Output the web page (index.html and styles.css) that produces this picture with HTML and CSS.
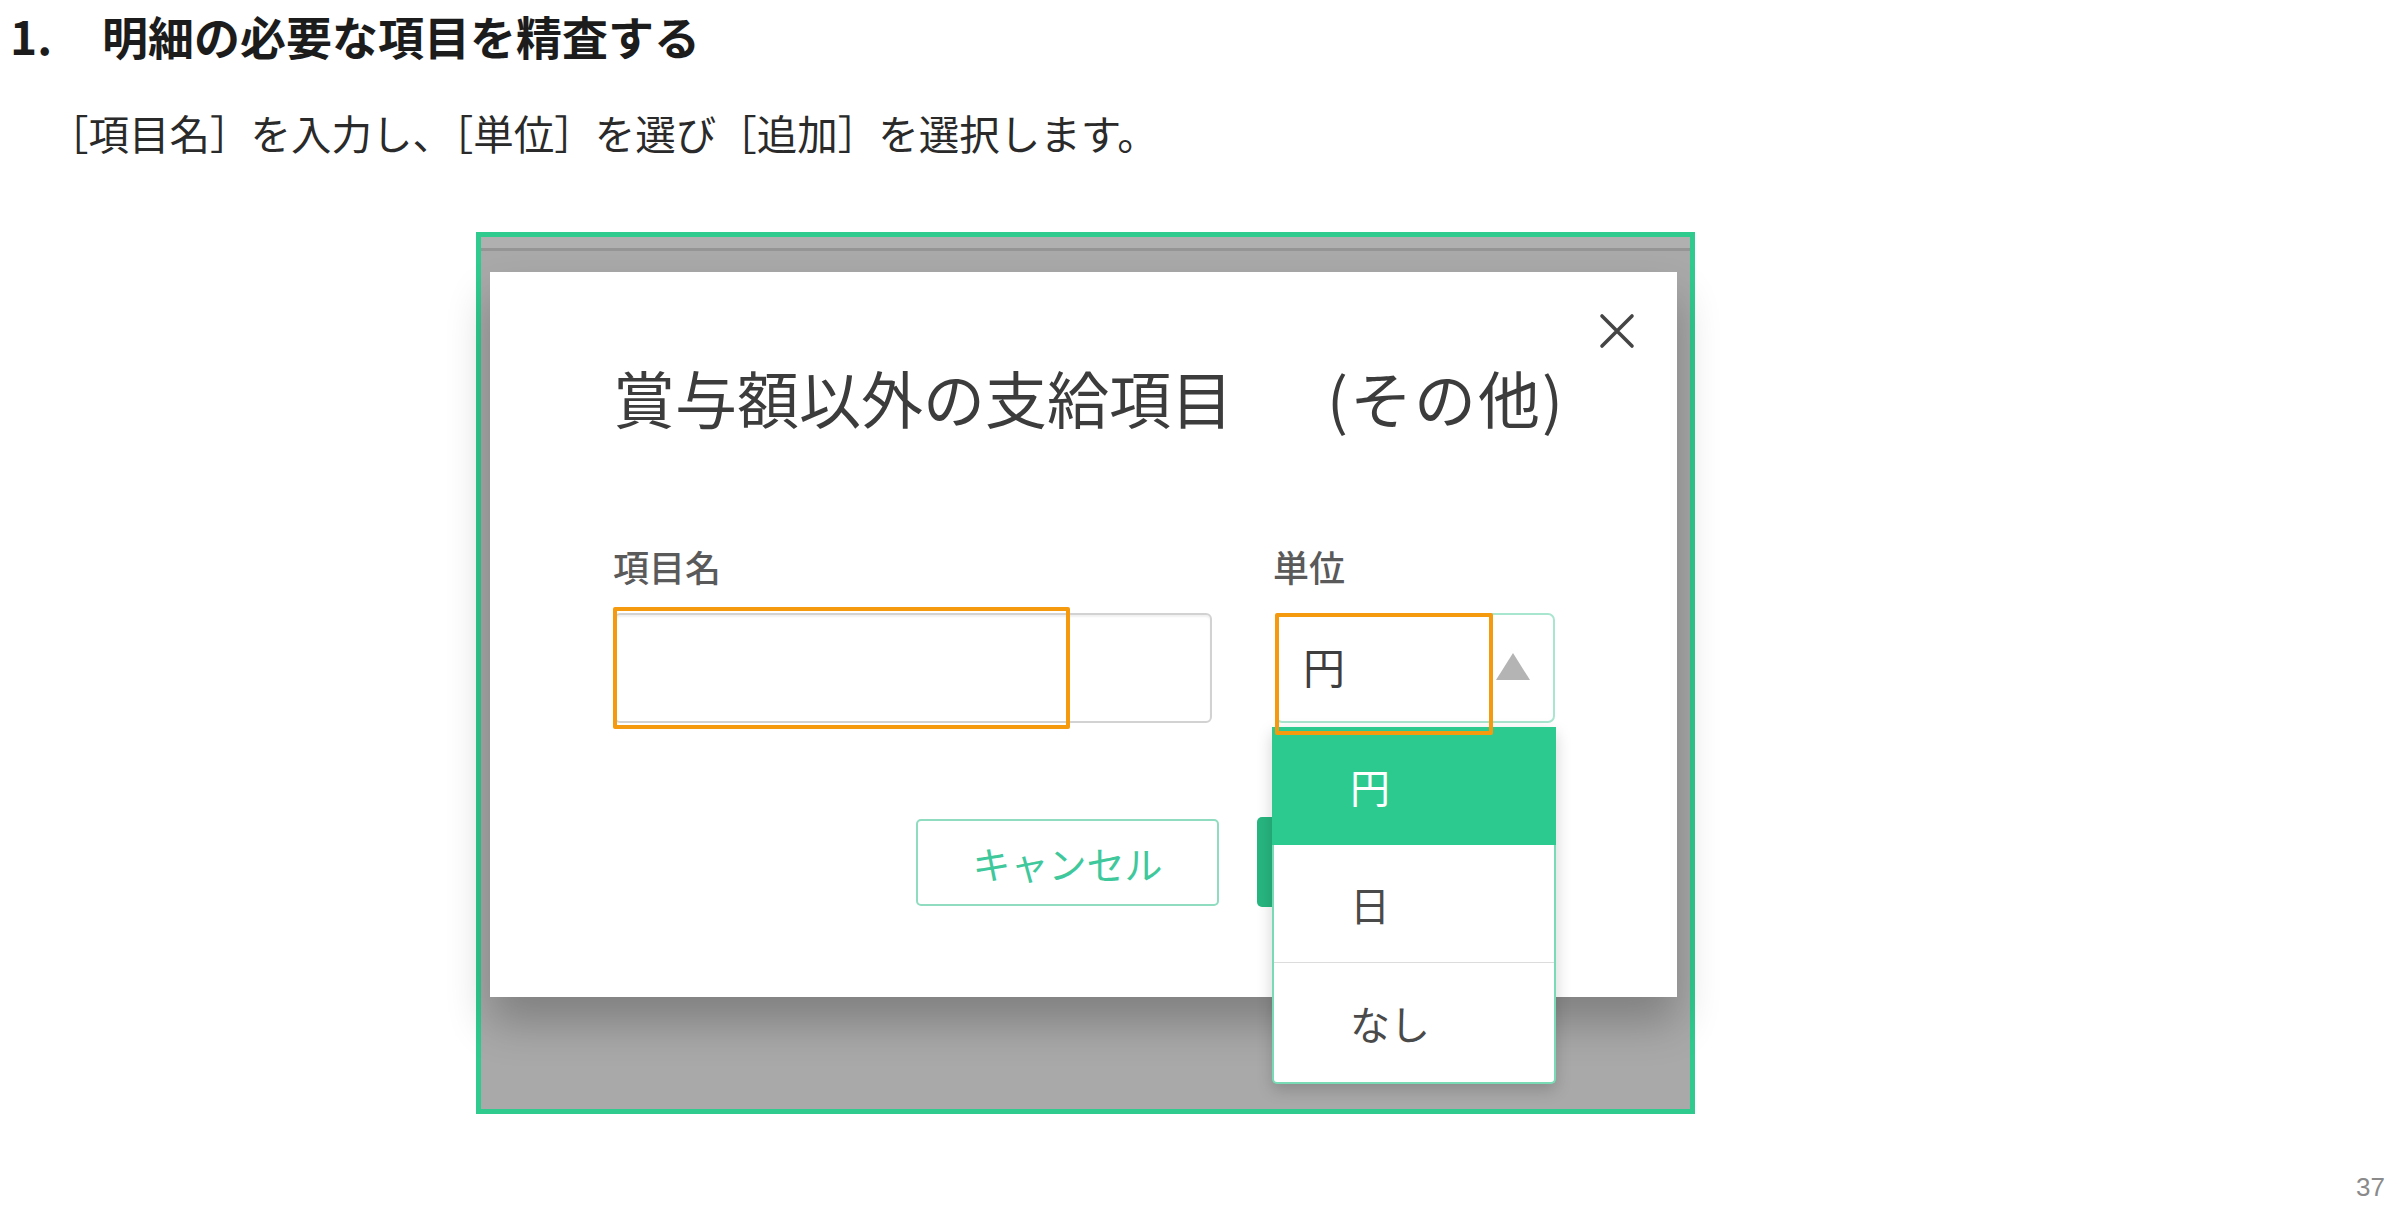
FILE: index.html
```html
<!DOCTYPE html>
<html lang="ja">
<head>
<meta charset="utf-8">
<title>明細の必要な項目を精査する</title>
<link rel="stylesheet" href="styles.css">
</head>
<body>
<h1 class="heading"><span class="num">1.</span>明細の必要な項目を精査する</h1>
<p class="lead">［項目名］を入力し、［単位］を選び［追加］を選択します。</p>
<div class="shot">
  <div class="modal">
    <button class="close" aria-label="閉じる">
      <svg viewBox="0 0 36 36" width="36" height="36"><path d="M3 3 L33 33 M33 3 L3 33" stroke="#454545" stroke-width="3.6" stroke-linecap="round" fill="none"/></svg>
    </button>
    <h2 class="modal-title">賞与額以外の支給項目<span class="paren">(その他)</span></h2>
    <div class="fields">
      <div class="field field-name">
        <div class="label">項目名</div>
        <div class="input"><span class="annot annot-name"></span></div>
      </div>
      <div class="field field-unit">
        <div class="label">単位</div>
        <div class="select">
          <span class="value">円</span>
          <span class="tri"></span>
          <span class="annot annot-unit"></span>
          <ul class="menu">
            <li class="opt opt-active">円</li>
            <li class="opt">日</li>
            <li class="opt opt-last">なし</li>
          </ul>
        </div>
      </div>
    </div>
    <div class="actions">
      <button class="btn btn-cancel">キャンセル</button>
      <button class="btn btn-add" aria-label="追加"></button>
    </div>
  </div>
</div>
<div class="page-num">37</div>
</body>
</html>
```

FILE: styles.css
```css
html, body {
  margin: 0;
  padding: 0;
  height: 1205px;
  overflow: hidden;
  background: #ffffff;
}
body {
  font-family: "Noto Sans CJK JP", "Noto Sans", sans-serif;
  color: #222;
}
.heading {
  margin: 12px 0 0 0;
  padding-left: 10px;
  font-size: 46px;
  line-height: 46px;
  font-weight: 700;
  color: #1c1c1c;
}
.num {
  display: inline-block;
  width: 92px;
}
.lead {
  margin: 55px 0 0 0;
  padding-left: 48px;
  font-size: 40.5px;
  line-height: 40px;
  font-weight: 400;
  color: #2a2a2a;
}
.shot {
  margin: 79px 0 0 476px;
  width: 1219px;
  box-sizing: border-box;
  border: 5px solid #2fcb8e;
  padding: 35px 13px 112px 9px;
  background: linear-gradient(to bottom, #b0b0b0 0, #b0b0b0 11px, #959595 11px, #959595 14px, #a9a9a9 14px, #a9a9a9 100%);
}
.modal {
  position: relative;
  height: 725px;
  box-sizing: border-box;
  background: #ffffff;
  padding: 95px 120px 0 123px;
  box-shadow: 0 26px 40px rgba(0, 0, 0, 0.24);
}
.close {
  position: absolute;
  top: 41px;
  right: 42px;
  width: 36px;
  height: 36px;
  padding: 0;
  border: 0;
  background: transparent;
}
.close svg { display: block; }
.modal-title {
  margin: 0;
  font-size: 62px;
  line-height: 60px;
  font-weight: 400;
  color: #3c3c3c;
  white-space: nowrap;
}
.paren {
  margin-left: 94px;
  letter-spacing: 2px;
}
.fields {
  display: flex;
  gap: 61px;
  margin-top: 121px;
}
.field-name { width: 599px; }
.field-unit { width: 282px; }
.label {
  font-size: 36px;
  line-height: 36px;
  font-weight: 500;
  color: #5a5a5a;
  height: 36px;
}
.input {
  position: relative;
  margin-top: 29px;
  height: 110px;
  box-sizing: border-box;
  border: 2px solid #d2d2d2;
  border-radius: 6px;
  box-shadow: inset 0 2px 2px rgba(0, 0, 0, 0.06);
  margin-left: 1px;
}
.annot {
  position: absolute;
  border: 4px solid #f59a0e;
  border-radius: 2px;
  box-sizing: border-box;
  pointer-events: none;
  z-index: 3;
}
.annot-name {
  left: -3px;
  top: -8px;
  width: 457px;
  height: 122px;
}
.select {
  position: relative;
  margin-top: 29px;
  height: 110px;
  box-sizing: border-box;
  border: 2px solid #a9e6cf;
  border-radius: 7px;
  display: flex;
  align-items: center;
  justify-content: space-between;
  padding: 0 23px 4px 26px;
  margin-left: 2px;
}
.value {
  font-size: 42px;
  line-height: 42px;
  color: #3e3e3e;
}
.tri {
  width: 0;
  height: 0;
  border-left: 17px solid transparent;
  border-right: 17px solid transparent;
  border-bottom: 27px solid #b4b4b4;
}
.annot-unit {
  left: -2px;
  top: -2px;
  width: 218px;
  height: 122px;
}
.menu {
  position: absolute;
  left: -5px;
  top: 112px;
  width: 284px;
  margin: 0;
  padding: 0;
  list-style: none;
  box-sizing: border-box;
  background: #ffffff;
  border: 2px solid #78dbb5;
  border-top: 0;
  border-radius: 0 0 5px 5px;
  box-shadow: 0 6px 16px rgba(0, 0, 0, 0.18);
  z-index: 2;
}
.opt {
  height: 118px;
  display: flex;
  align-items: center;
  padding-left: 76px;
  font-size: 40px;
  line-height: 40px;
  color: #4a4a4a;
  border-bottom: 1px solid #dcdcdc;
  box-sizing: border-box;
}
.opt-active {
  background: #2dca8f;
  color: #ffffff;
  margin: 0 -2px;
  padding-left: 78px;
  border-bottom: 0;
}
.opt-last {
  border-bottom: 0;
  height: 119px;
}
.actions {
  display: flex;
  justify-content: flex-end;
  align-items: center;
  gap: 38px;
  margin-top: 94px;
  margin-right: 1px;
  height: 90px;
}
.btn {
  font-family: "Noto Sans CJK JP", "Noto Sans", sans-serif;
  font-size: 38px;
  border-radius: 5px;
  box-sizing: border-box;
  padding: 0;
}
.btn-cancel {
  width: 303px;
  height: 87px;
  background: #ffffff;
  border: 2px solid #8fdcc1;
  color: #3ec89b;
}
.btn-add {
  width: 299px;
  height: 90px;
  background: #27b680;
  border: 0;
}
.page-num {
  margin-top: 60px;
  text-align: right;
  padding-right: 15px;
  font-family: "Liberation Sans", Arial, sans-serif;
  font-size: 26px;
  line-height: 26px;
  color: #8a8a8a;
}
```
